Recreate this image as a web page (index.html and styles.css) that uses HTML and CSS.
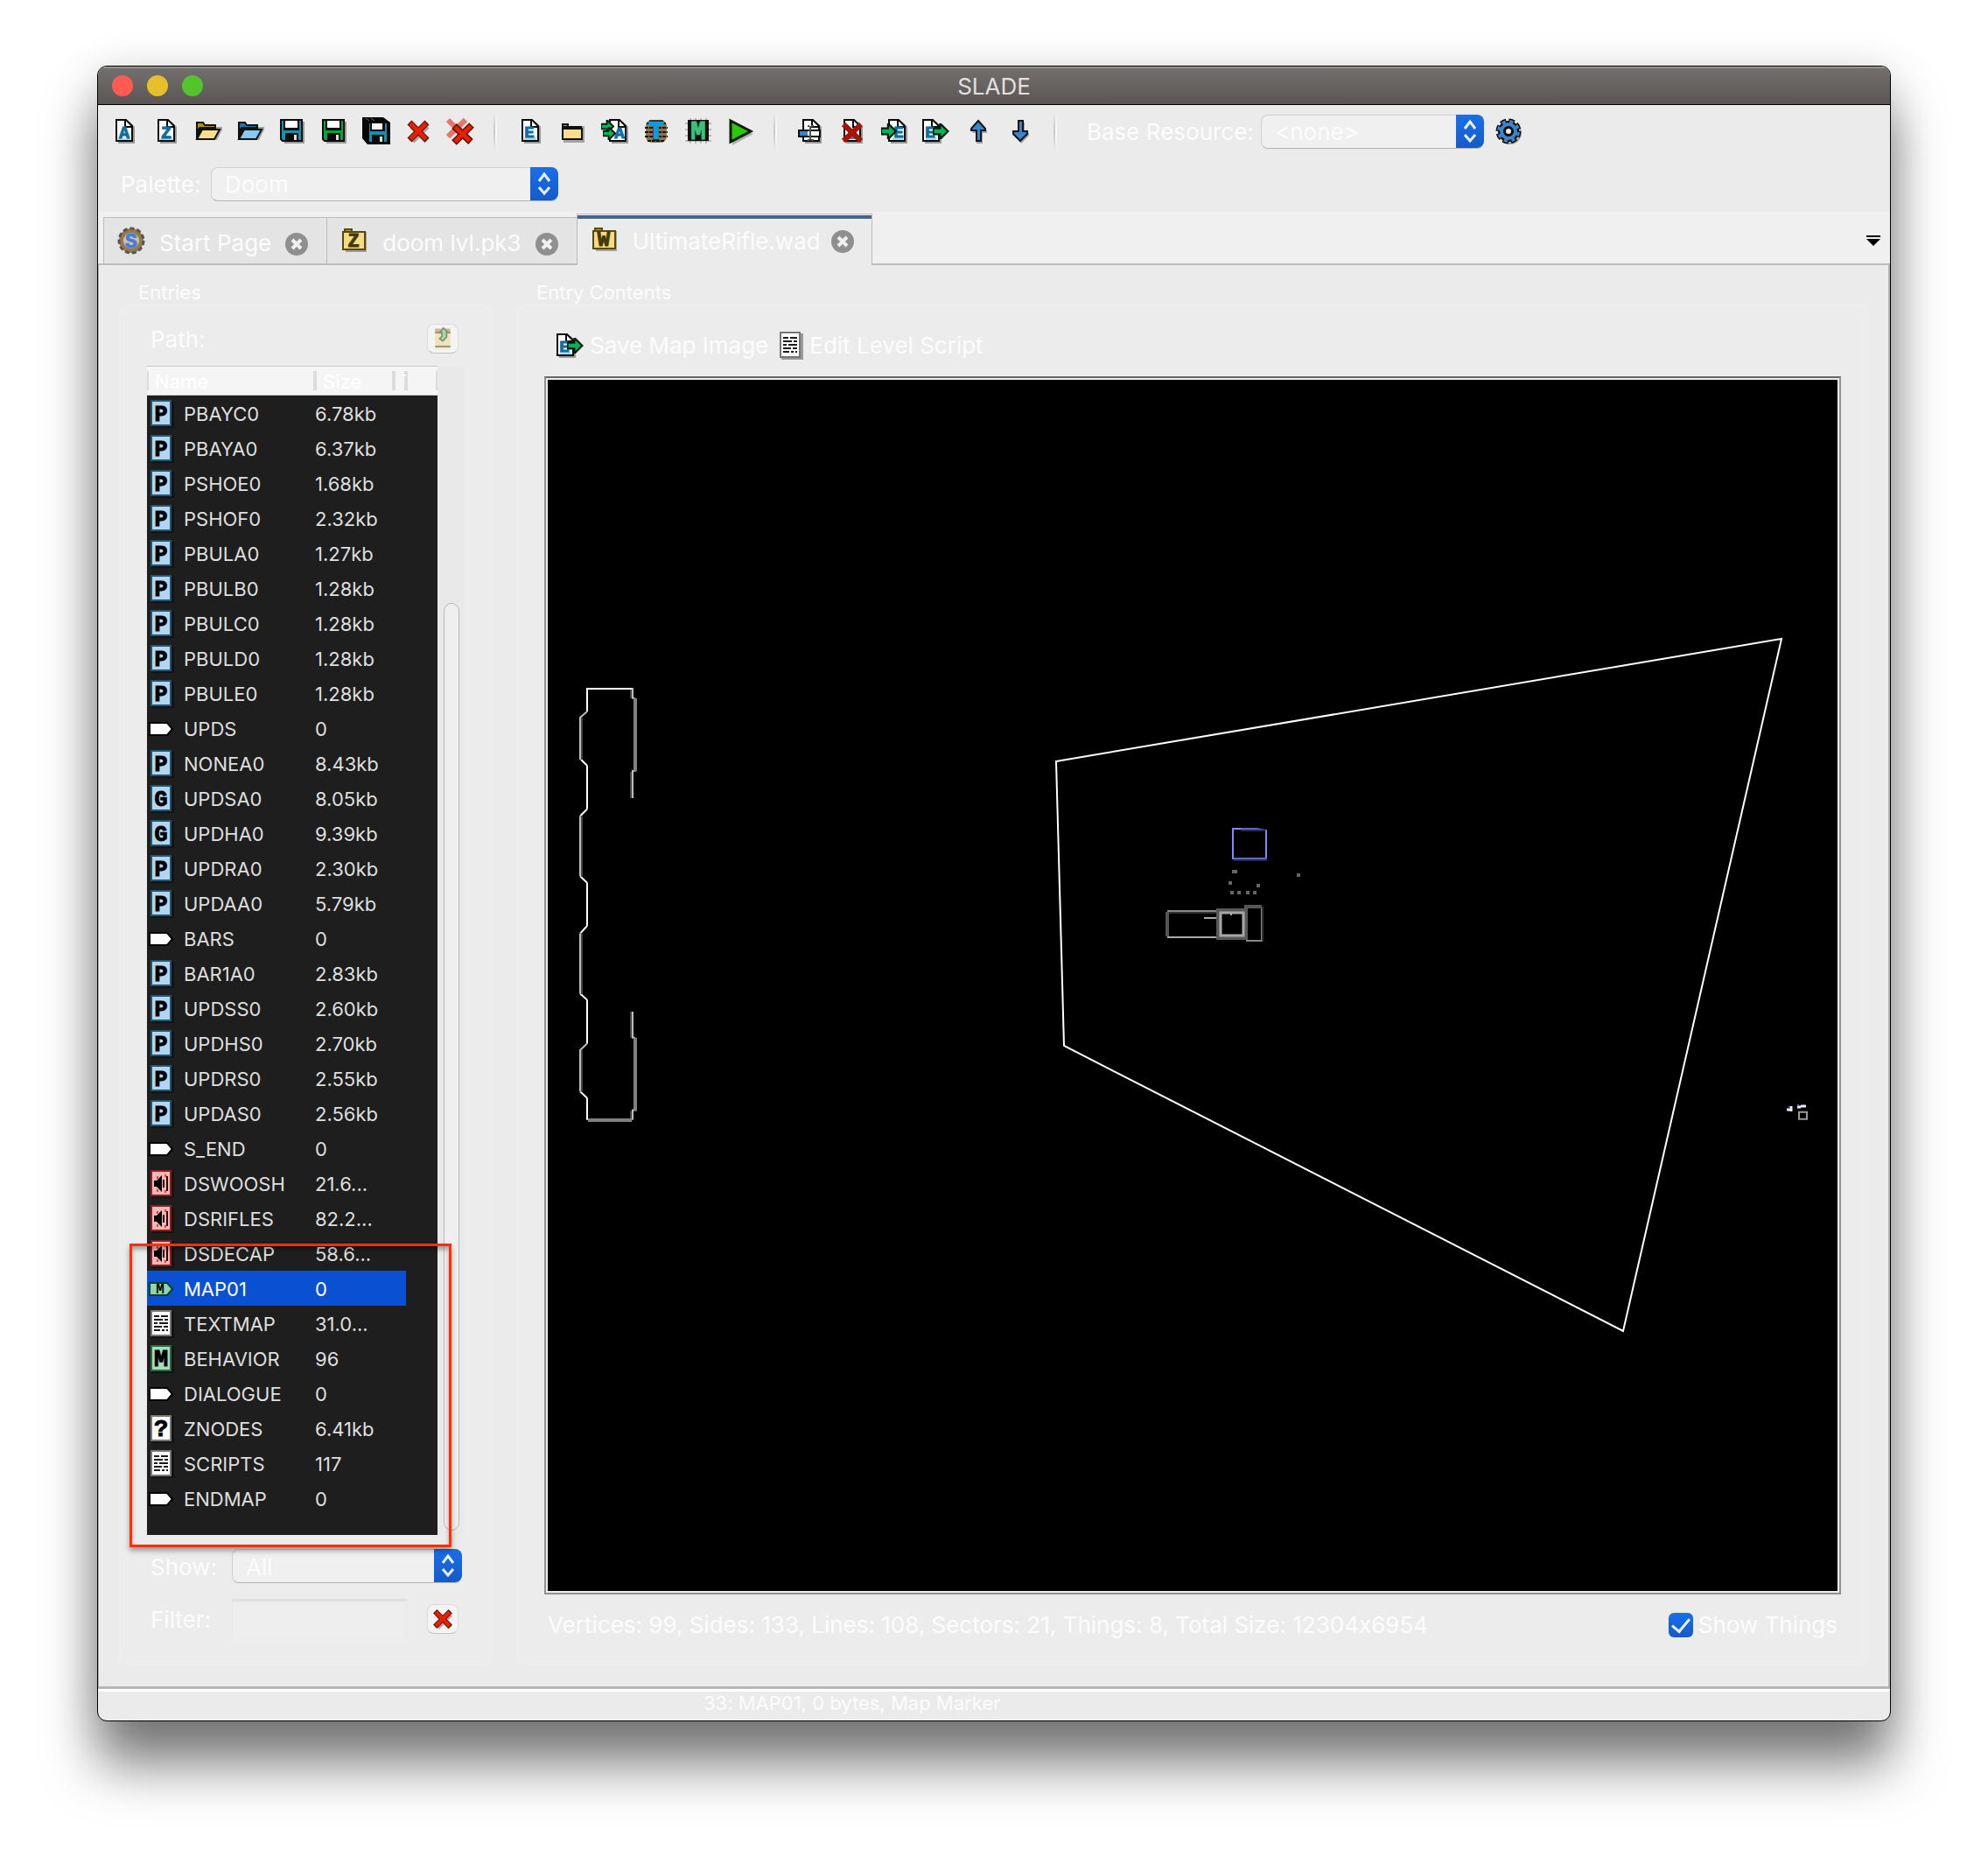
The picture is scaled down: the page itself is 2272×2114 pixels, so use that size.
FILE: index.html
```html
<!DOCTYPE html>
<html lang="en">
<head>
<meta charset="utf-8">
<title>SLADE</title>
<link rel="stylesheet" href="styles.css">
</head>
<body>
<svg class="sprite" aria-hidden="true">
  <symbol id="page" viewBox="0 0 32 32">
    <path d="M9 5h13l6 6v19H9z" fill="#000" opacity=".35"/>
    <path d="M7 3h11l7 7v17H7z" fill="#fff" stroke="#0a0a0a" stroke-width="2"/>
    <path d="M17 3v8h8" fill="none" stroke="#0a0a0a" stroke-width="2"/>
  </symbol>
  <symbol id="new-wad" viewBox="0 0 32 32">
    <use href="#page" width="32" height="32"/><path d="M9 24h14v2H9z" fill="#a9dcf5"/><text x="16" y="24" class="g blue" font-size="20">A</text>
  </symbol>
  <symbol id="new-zip" viewBox="0 0 32 32">
    <use href="#page" width="32" height="32"/><path d="M9 24h14v2H9z" fill="#a9dcf5"/><text x="16" y="24" class="g blue" font-size="20">Z</text>
  </symbol>
  <symbol id="entry" viewBox="0 0 32 32">
    <use href="#page" width="32" height="32"/><path d="M9 23h14v3H9z" fill="#a9dcf5"/><text x="15" y="23" class="g blue" font-size="19">E</text>
  </symbol>
  <symbol id="open" viewBox="0 0 32 32">
    <path d="M5 26h21l6-12v-3H9z" fill="#000" opacity=".3"/>
    <path d="M3 25V6h7l2 3h12v6" fill="var(--dark)" stroke="#111" stroke-width="2"/>
    <path d="M3 24V14l3-3h18v4H10z" fill="#111"/>
    <path d="M9 14h20l-6 11H3z" fill="var(--light)" stroke="#111" stroke-width="2"/>
  </symbol>
  <symbol id="disk" viewBox="0 0 32 32">
    <path d="M5 5h25v25H7z" fill="#000" opacity=".35"/>
    <path d="M3 3h24v24H5l-2-2z" fill="var(--disk)" stroke="#0a0a0a" stroke-width="2"/>
    <path d="M6 3h18v12H6z" fill="#0a0a0a"/><path d="M8 4h14v8H8z" fill="#fff"/>
    <path d="M8 18h15v9H8z" fill="#0a0a0a"/><path d="M18 20h3v6h-3z" fill="#ddd"/>
  </symbol>
  <symbol id="disks" viewBox="0 0 32 32">
    <path d="M0 0h24l8 6v25H6L0 24z" fill="#050505"/>
    <path d="M4 1l4 3M10 1l4 3" stroke="#666"/>
    <path d="M7 6h22v23H7z" fill="var(--disk)" stroke="#0a0a0a" stroke-width="2"/>
    <path d="M9 5h17v11H9z" fill="#0a0a0a"/><path d="M11 7h12v7H11z" fill="#fff"/>
    <path d="M11 20h14v9H11z" fill="#0a0a0a"/><path d="M20 22h3v6h-3z" fill="#ddd"/>
  </symbol>
  <symbol id="cross" viewBox="0 0 32 32">
    <path d="M9 10l17 17M26 10L9 27" stroke="#000" stroke-opacity=".3" stroke-width="7"/>
    <path d="M6 6l20 20M26 6L6 26" stroke="#5d1206" stroke-width="7"/>
    <path d="M7 7l18 18M25 7L7 25" stroke="#e62000" stroke-width="5"/>
  </symbol>
  <symbol id="cross-all" viewBox="0 0 32 32">
    <path d="M2 3l17 17M22 3L2 22" stroke="#e8756a" stroke-width="6"/>
    <path d="M9 10l19 18M29 9L9 29" stroke="#5d1206" stroke-width="8"/>
    <path d="M10 11l17 16M28 10L10 28" stroke="#e62000" stroke-width="5"/>
  </symbol>
  <symbol id="folder" viewBox="0 0 32 32">
    <path d="M6 10h24v19H6z" fill="#000" opacity=".3"/>
    <path d="M5 8h6v4H5z" fill="#c79d17" stroke="#111" stroke-width="2"/>
    <path d="M4 10h23v4H4z" fill="#111"/>
    <path d="M5 13h22v12H5z" fill="#f6de8c" stroke="#111" stroke-width="2"/>
  </symbol>
  <symbol id="arrow" viewBox="0 0 16 16">
    <path d="M0 5h7V0l8 8-8 8v-5H0z" fill="#00b457" stroke="#0a1a10" stroke-width="2"/>
  </symbol>
  <symbol id="import-files" viewBox="0 0 32 32">
    <use href="#page" x="4" width="32" height="32"/><text x="22" y="24" class="g blue" font-size="19">A</text>
    <use href="#arrow" x="1" y="3" width="15" height="15"/><use href="#arrow" x="3" y="11" width="15" height="15"/>
  </symbol>
  <symbol id="texture" viewBox="0 0 32 32">
    <rect x="4" y="3" width="24" height="26" rx="7" fill="#8f7350"/>
    <path d="M5 7h22M3 12h26M3 17h26M3 22h26M6 27h20" stroke="#1c150d" stroke-width="2" stroke-dasharray="4 1"/>
    <path d="M8 3h16v7h-5v17h-7V10H8z" fill="#1c150d" opacity=".7"/>
    <text x="16" y="24" class="g" font-size="28" fill="#0b9be0" stroke="#0b9be0" stroke-width="2">T</text>
  </symbol>
  <symbol id="map" viewBox="0 0 32 32">
    <path d="M1 7h30M1 14h30M1 21h30M1 27h30M7 1v29M13 1v29M19 1v29M25 1v29" stroke="#888"/>
    <path d="M4 3h24v24H4z" fill="#101010"/>
    <text x="16" y="25" class="g" font-size="29" fill="#3fc07a" stroke="#3fc07a">M</text>
  </symbol>
  <symbol id="run" viewBox="0 0 32 32">
    <path d="M7 6l24 13L7 32z" fill="#000" opacity=".25"/>
    <path d="M5 4l23 12L5 28z" fill="#2cc80c" stroke="#0a1a08" stroke-width="3"/>
  </symbol>
  <symbol id="rename" viewBox="0 0 32 32">
    <use href="#page" x="1" width="32" height="32"/>
    <path d="M3 15h24v7H3z" fill="#fff" stroke="#111" stroke-width="2"/><path d="M4 16h9v5H4z" fill="#3283c8"/>
    <path d="M16 10v16M13 10h2M17 10h3M13 26h2M17 26h3" stroke="#555" stroke-width="2"/>
  </symbol>
  <symbol id="delete" viewBox="0 0 32 32">
    <use href="#page" width="32" height="32"/><path d="M11 13h10v12H11z" fill="#4d7da8"/>
    <path d="M6 8l20 19M26 8L6 27" stroke="#a81200" stroke-width="6"/>
  </symbol>
  <symbol id="import" viewBox="0 0 32 32">
    <use href="#page" x="3" width="32" height="32"/><path d="M14 23h12v3H14z" fill="#a9dcf5"/><text x="21" y="23" class="g blue" font-size="19">E</text>
    <use href="#arrow" x="1" y="7" width="18" height="18"/>
  </symbol>
  <symbol id="export" viewBox="0 0 32 32">
    <use href="#page" x="-6" width="32" height="32"/><path d="M4 23h12v3H4z" fill="#a9dcf5"/><text x="9" y="23" class="g blue" font-size="19">E</text>
    <use href="#arrow" x="12" y="7" width="19" height="18"/>
  </symbol>
  <symbol id="up" viewBox="0 0 32 32">
    <path d="M17 6l9 9v3h-5v12h-7V18H9z" fill="#000" opacity=".3"/>
    <path d="M16 4l8 9v2h-5v12h-5V15H8v-2z" fill="#3b86c8" stroke="#0c1620" stroke-width="2"/>
  </symbol>
  <symbol id="down" viewBox="0 0 32 32">
    <path d="M17 30l9-9v-3h-5V6h-7v12H9z" fill="#000" opacity=".3"/>
    <path d="M16 27l8-8v-3h-5V4h-5v12H8v3z" fill="#3b86c8" stroke="#0c1620" stroke-width="2"/>
  </symbol>
  <symbol id="gear" viewBox="0 0 32 32">
    <circle cx="18" cy="18" r="13" fill="#000" opacity=".3"/>
    <circle cx="16" cy="16" r="12" fill="#0a0a0a" stroke="#0a0a0a" stroke-width="5" stroke-dasharray="6.4 3.02"/>
    <circle cx="16" cy="16" r="11" fill="none" stroke="#3b86c8" stroke-width="4" stroke-dasharray="4 4.64" stroke-dashoffset="-1"/>
    <circle cx="16" cy="16" r="8" fill="none" stroke="#3b86c8" stroke-width="4"/>
    <circle cx="16" cy="16" r="3" fill="#eee"/>
  </symbol>
  <symbol id="slade" viewBox="0 0 32 32">
    <circle cx="16" cy="16" r="14" fill="#97794a" stroke="#555" stroke-width="3" stroke-dasharray="5 3"/>
    <circle cx="16" cy="16" r="9" fill="#c9c4b8"/>
    <text x="16" y="24" class="g" font-size="23" fill="#4a7bd6" stroke="#4a7bd6">S</text>
  </symbol>
  <symbol id="arch" viewBox="0 0 32 32">
    <path d="M4 6h26v23H6z" fill="#000" opacity=".3"/>
    <path d="M5 3h8v4H5z" fill="#bf9a17" stroke="#5b4a0b" stroke-width="2"/>
    <path d="M3 6h25v20H3z" fill="#f3dc84" stroke="#5b4a0b" stroke-width="2"/>
  </symbol>
  <symbol id="zip" viewBox="0 0 32 32"><use href="#arch" width="32" height="32"/><text x="15" y="23" class="g" font-size="22" fill="#453705" stroke="#453705">Z</text></symbol>
  <symbol id="wad" viewBox="0 0 32 32"><use href="#arch" width="32" height="32"/><text x="15" y="23" class="g" font-size="24" fill="#453705" stroke="#453705">W</text></symbol>
  <symbol id="close" viewBox="0 0 26 26">
    <circle cx="13" cy="13" r="13" fill="#8f8f8f"/><path d="M8 8l10 10M18 8L8 18" stroke="#f0f0f0" stroke-width="4"/>
  </symbol>
  <symbol id="step" viewBox="0 0 32 38">
    <path d="M10 16l6-8 6 8M10 23l6 7 6-7" fill="none" stroke="#e8effc" stroke-width="3"/>
  </symbol>
  <symbol id="card" viewBox="0 0 32 32">
    <path d="M6 2h25v30H6z" fill="#000" opacity=".35"/>
    <path d="M5 1h22v28H5z" fill="var(--fill)" stroke="var(--edge)" stroke-width="2"/>
  </symbol>
  <symbol id="patch" viewBox="0 0 32 32"><use href="#card" width="32" height="32"/><text x="16" y="24" class="g" font-size="25" stroke="#000">P</text></symbol>
  <symbol id="gfx" viewBox="0 0 32 32"><use href="#card" width="32" height="32"/><text x="16" y="24" class="g" font-size="25" stroke="#000">G</text></symbol>
  <symbol id="behavior" viewBox="0 0 32 32"><use href="#card" width="32" height="32"/><text x="16" y="24" class="g" font-size="27" stroke="#000">M</text></symbol>
  <symbol id="unknown" viewBox="0 0 32 32"><use href="#card" width="32" height="32"/><text x="16" y="24" class="g" font-size="27" stroke="#000">?</text></symbol>
  <symbol id="sound" viewBox="0 0 32 32">
    <use href="#card" width="32" height="32"/>
    <path d="M8 12h3l6-6v19l-6-6H8z" fill="#000"/><path d="M19 11v9M23 7v17" stroke="#2a0505" stroke-width="2"/>
    <path d="M12 7v3M12 22v3M21 5v3M21 23v3" stroke="#e64040" stroke-width="2"/>
  </symbol>
  <symbol id="text" viewBox="0 0 32 32">
    <use href="#card" width="32" height="32"/>
    <path d="M8 7h6M16 7h8M8 11h10M20 11h4M8 15h4M14 15h10M8 19h9M19 19h5M8 23h7M17 23h3M22 23h2" stroke="#1a1a1a" stroke-width="2"/>
  </symbol>
  <symbol id="marker" viewBox="0 0 32 32">
    <path d="M3 9h20l6 7-6 7H3z" fill="#fff" stroke="#000" stroke-width="2"/>
  </symbol>
  <symbol id="mapmarker" viewBox="0 0 32 32">
    <path d="M3 9h20l6 7-6 7H3z" fill="#8fd8a6" stroke="#0e3a3a" stroke-width="2"/>
    <text x="15" y="21" class="g" font-size="16">M</text>
  </symbol>
  <symbol id="updir" viewBox="0 0 32 32">
    <path d="M6 3h20v26H6z" fill="#efe3b8"/><path d="M6 3h20v4H6z" fill="#c9bb82"/><path d="M6 8h20M6 26h20" stroke="#908c78" stroke-width="2"/>
    <path d="M17 2l6 6h-2v6l-5 5-4-3 3-3V8h-3z" fill="#a3d9a5" stroke="#7d8f80" stroke-width="2"/>
  </symbol>
</svg>

<main class="window">
  <header class="titlebar">
    <div class="lights">
      <button class="light red" aria-label="Close"></button>
      <button class="light amber" aria-label="Minimize"></button>
      <button class="light green" aria-label="Zoom"></button>
    </div>
    <h1>SLADE</h1>
  </header>

  <div class="toolbar">
    <div class="tools">
      <button class="tool" aria-label="New WAD"><svg><use href="#new-wad"/></svg></button>
      <button class="tool" aria-label="New Zip"><svg><use href="#new-zip"/></svg></button>
      <button class="tool yellow" aria-label="Open"><svg><use href="#open"/></svg></button>
      <button class="tool sky" aria-label="Open Directory"><svg><use href="#open"/></svg></button>
      <button class="tool teal" aria-label="Save"><svg><use href="#disk"/></svg></button>
      <button class="tool leaf" aria-label="Save As"><svg><use href="#disk"/></svg></button>
      <button class="tool teal" aria-label="Save All"><svg><use href="#disks"/></svg></button>
      <button class="tool" aria-label="Close Archive"><svg><use href="#cross"/></svg></button>
      <button class="tool" aria-label="Close All"><svg><use href="#cross-all"/></svg></button>
      <span class="rule"></span>
      <button class="tool" aria-label="New Entry"><svg><use href="#entry"/></svg></button>
      <button class="tool" aria-label="New Directory"><svg><use href="#folder"/></svg></button>
      <button class="tool" aria-label="Import Files"><svg><use href="#import-files"/></svg></button>
      <button class="tool" aria-label="Texture Editor"><svg><use href="#texture"/></svg></button>
      <button class="tool" aria-label="Map Editor"><svg><use href="#map"/></svg></button>
      <button class="tool" aria-label="Run Archive"><svg><use href="#run"/></svg></button>
      <span class="rule"></span>
      <button class="tool" aria-label="Rename Entry"><svg><use href="#rename"/></svg></button>
      <button class="tool" aria-label="Delete Entry"><svg><use href="#delete"/></svg></button>
      <button class="tool" aria-label="Import Entry"><svg><use href="#import"/></svg></button>
      <button class="tool" aria-label="Export Entry"><svg><use href="#export"/></svg></button>
      <button class="tool" aria-label="Move Up"><svg><use href="#up"/></svg></button>
      <button class="tool" aria-label="Move Down"><svg><use href="#down"/></svg></button>
      <span class="rule"></span>
      <label class="base-label" for="base">Base Resource:</label>
      <span class="select base"><select id="base"><option>&lt;none&gt;</option></select><svg class="step"><use href="#step"/></svg></span>
      <button class="tool" aria-label="Settings"><svg><use href="#gear"/></svg></button>
    </div>
    <div class="tools palette-row">
      <label class="palette-label" for="palette">Palette:</label>
      <span class="select palette"><select id="palette"><option>Doom</option></select><svg class="step"><use href="#step"/></svg></span>
    </div>
  </div>

  <nav class="tabs">
    <div class="tab"><svg class="icon"><use href="#slade"/></svg><span class="name">Start Page</span><button class="close" aria-label="Close tab"><svg><use href="#close"/></svg></button></div>
    <div class="tab"><svg class="icon"><use href="#zip"/></svg><span class="name">doom lvl.pk3</span><button class="close" aria-label="Close tab"><svg><use href="#close"/></svg></button></div>
    <div class="tab active"><svg class="icon"><use href="#wad"/></svg><span class="name">UltimateRifle.wad</span><button class="close" aria-label="Close tab"><svg><use href="#close"/></svg></button></div>
    <button class="tab-menu" aria-label="Tab list"><svg viewBox="0 0 16 12"><path d="M0 0h16v2H0zM0 4h16l-8 8z"/></svg></button>
  </nav>

  <div class="content">
    <section class="group entries">
      <h2>Entries</h2>
      <div class="box">
        <div class="path-row"><span>Path:</span><button class="mini" aria-label="Up directory" disabled><svg><use href="#updir"/></svg></button></div>
        <div class="list">
          <div class="rows">
            <table>
              <colgroup><col class="c-name"><col class="c-size"><col class="c-type"><col></colgroup>
              <thead><tr><th>Name</th><th>Size</th><th>T</th><th></th></tr></thead>
              <tbody>
                <tr><td><div class="entry blue-card"><svg><use href="#patch"/></svg>PBAYC0</div></td><td>6.78kb</td><td></td><td></td></tr>
                <tr><td><div class="entry blue-card"><svg><use href="#patch"/></svg>PBAYA0</div></td><td>6.37kb</td><td></td><td></td></tr>
                <tr><td><div class="entry blue-card"><svg><use href="#patch"/></svg>PSHOE0</div></td><td>1.68kb</td><td></td><td></td></tr>
                <tr><td><div class="entry blue-card"><svg><use href="#patch"/></svg>PSHOF0</div></td><td>2.32kb</td><td></td><td></td></tr>
                <tr><td><div class="entry blue-card"><svg><use href="#patch"/></svg>PBULA0</div></td><td>1.27kb</td><td></td><td></td></tr>
                <tr><td><div class="entry blue-card"><svg><use href="#patch"/></svg>PBULB0</div></td><td>1.28kb</td><td></td><td></td></tr>
                <tr><td><div class="entry blue-card"><svg><use href="#patch"/></svg>PBULC0</div></td><td>1.28kb</td><td></td><td></td></tr>
                <tr><td><div class="entry blue-card"><svg><use href="#patch"/></svg>PBULD0</div></td><td>1.28kb</td><td></td><td></td></tr>
                <tr><td><div class="entry blue-card"><svg><use href="#patch"/></svg>PBULE0</div></td><td>1.28kb</td><td></td><td></td></tr>
                <tr><td><div class="entry"><svg><use href="#marker"/></svg>UPDS</div></td><td>0</td><td></td><td></td></tr>
                <tr><td><div class="entry blue-card"><svg><use href="#patch"/></svg>NONEA0</div></td><td>8.43kb</td><td></td><td></td></tr>
                <tr><td><div class="entry blue-card"><svg><use href="#gfx"/></svg>UPDSA0</div></td><td>8.05kb</td><td></td><td></td></tr>
                <tr><td><div class="entry blue-card"><svg><use href="#gfx"/></svg>UPDHA0</div></td><td>9.39kb</td><td></td><td></td></tr>
                <tr><td><div class="entry blue-card"><svg><use href="#patch"/></svg>UPDRA0</div></td><td>2.30kb</td><td></td><td></td></tr>
                <tr><td><div class="entry blue-card"><svg><use href="#patch"/></svg>UPDAA0</div></td><td>5.79kb</td><td></td><td></td></tr>
                <tr><td><div class="entry"><svg><use href="#marker"/></svg>BARS</div></td><td>0</td><td></td><td></td></tr>
                <tr><td><div class="entry blue-card"><svg><use href="#patch"/></svg>BAR1A0</div></td><td>2.83kb</td><td></td><td></td></tr>
                <tr><td><div class="entry blue-card"><svg><use href="#patch"/></svg>UPDSS0</div></td><td>2.60kb</td><td></td><td></td></tr>
                <tr><td><div class="entry blue-card"><svg><use href="#patch"/></svg>UPDHS0</div></td><td>2.70kb</td><td></td><td></td></tr>
                <tr><td><div class="entry blue-card"><svg><use href="#patch"/></svg>UPDRS0</div></td><td>2.55kb</td><td></td><td></td></tr>
                <tr><td><div class="entry blue-card"><svg><use href="#patch"/></svg>UPDAS0</div></td><td>2.56kb</td><td></td><td></td></tr>
                <tr><td><div class="entry"><svg><use href="#marker"/></svg>S_END</div></td><td>0</td><td></td><td></td></tr>
                <tr><td><div class="entry red-card"><svg><use href="#sound"/></svg>DSWOOSH</div></td><td>21.6...</td><td></td><td></td></tr>
                <tr><td><div class="entry red-card"><svg><use href="#sound"/></svg>DSRIFLES</div></td><td>82.2...</td><td></td><td></td></tr>
                <tr><td><div class="entry red-card"><svg><use href="#sound"/></svg>DSDECAP</div></td><td>58.6...</td><td></td><td></td></tr>
                <tr class="selected"><td><div class="entry"><svg><use href="#mapmarker"/></svg>MAP01</div></td><td>0</td><td></td><td></td></tr>
                <tr><td><div class="entry white-card"><svg><use href="#text"/></svg>TEXTMAP</div></td><td>31.0...</td><td></td><td></td></tr>
                <tr><td><div class="entry green-card"><svg><use href="#behavior"/></svg>BEHAVIOR</div></td><td>96</td><td></td><td></td></tr>
                <tr><td><div class="entry"><svg><use href="#marker"/></svg>DIALOGUE</div></td><td>0</td><td></td><td></td></tr>
                <tr><td><div class="entry white-card"><svg><use href="#unknown"/></svg>ZNODES</div></td><td>6.41kb</td><td></td><td></td></tr>
                <tr><td><div class="entry white-card"><svg><use href="#text"/></svg>SCRIPTS</div></td><td>117</td><td></td><td></td></tr>
                <tr><td><div class="entry"><svg><use href="#marker"/></svg>ENDMAP</div></td><td>0</td><td></td><td></td></tr>
              </tbody>
            </table>
          </div>
          <div class="scrollbar"><div class="thumb"></div></div>
          <div class="callout"></div>
        </div>
        <div class="form-row show-row"><label for="show">Show:</label><span class="select show"><select id="show"><option>All</option></select><svg class="step"><use href="#step"/></svg></span></div>
        <div class="form-row filter-row"><label for="filter">Filter:</label><input id="filter" type="text"><button class="mini" aria-label="Clear filter"><svg><use href="#cross"/></svg></button></div>
      </div>
    </section>

    <section class="group preview">
      <h2>Entry Contents</h2>
      <div class="box">
        <div class="actions">
          <button class="action"><svg><use href="#export"/></svg>Save Map Image</button>
          <button class="action white-card"><svg><use href="#text"/></svg>Edit Level Script</button>
        </div>
        <div class="canvas">
          <svg viewBox="0 0 1474 1384" fill="none">
            <path d="M581 436L1410 296L1229 1087L590 761Z" stroke="#fff" stroke-width="2"/>
            <g transform="translate(14 336) scale(.33333 .338)" stroke-width="6">
              <path d="M249 50H93V127M93 310V457M93 706V852M93 1102V1250M93 1434V1508M72 290L93 310M93 457L70 480M70 685L93 706M93 852L70 877M70 1082L93 1102M70 1413L93 1434" stroke="#fff"/>
              <path d="M93 127L69 148V290M69 480V685M69 877V1082M93 1250L69 1272V1413M249 47V82H257M258 328H249V420M249 1142V1230H258M258 1475H249V1508" stroke="#bbb"/>
              <path d="M75 148V290M75 480V685M75 877V1082M75 1272V1413M243 53V82M243 331V420M243 1142V1230M243 1478V1505" stroke="#444"/>
              <path d="M258 82V330M258 1230V1478M96 1509H246" stroke="#808080" stroke-width="12"/>
            </g>
            <g transform="translate(684 496) scale(.33333)" stroke-width="6">
              <path d="M297 156V51H324M411 54V153" stroke="#8088ff"/><path d="M324 51H378L411 57M300 153H414" stroke="#6068c0"/><path d="M300 159H414M324 57H408" stroke="#262850"/>
              <path d="M294 198h18M516 210h12M282 237h12M378 246h12M288 270h12M312 270h12M342 270h12M366 270h12" stroke="#666" stroke-width="12"/>
              <path d="M72 333H246M342 435H396V318" stroke="#888"/>
              <path d="M72 339H246M399 318V435" stroke="#333"/><path d="M72 336V420" stroke="#555" stroke-width="12"/>
              <path d="M72 423H252M198 357H246M291 342v6" stroke="#aaa"/>
              <path d="M246 330H342V426H246zM336 318H396" stroke="#585858" stroke-width="12"/>
              <path d="M255 339H333V417H255z" stroke="#a8a8a8" stroke-width="9"/>
            </g>
            <g transform="translate(1154 806) scale(.33333)" stroke-width="6">
              <path d="M786 84h18M801 72v18M822 75h12M834 72h18" stroke="#eee" stroke-width="9"/>
              <path d="M795 72v9M825 66v6" stroke="#6068c8"/>
              <path d="M828 92H855V116H828z" stroke="#999"/>
            </g>
          </svg>
        </div>
        <div class="info"><span>Vertices: 99, Sides: 133, Lines: 108, Sectors: 21, Things: 8, Total Size: 12304x6954</span>
          <label class="things"><input type="checkbox" checked>Show Things</label></div>
      </div>
    </section>
  </div>

  <footer class="status"><span>33: MAP01, 0 bytes, Map Marker</span></footer>
</main>
</body>
</html>
```

FILE: styles.css
```css
* { box-sizing: border-box; }

body {
  margin: 0;
  padding: 75px 111px 147px;
  background: #fff;
  color: #fcfcfc;
  font: 26px/32px Inter, "Liberation Sans", sans-serif;
  font-feature-settings: "calt" 0;
}

h1, h2 { margin: 0; font-weight: 400; }
button, select, input { font: inherit; color: inherit; font-feature-settings: inherit; }
button { padding: 0; border: 0; background: none; }
svg { display: block; }
.sprite { display: none; }

/* letters inside icons */
.g { font-family: "Liberation Mono", monospace; font-weight: 700; text-anchor: middle; }
.blue { fill: #0c6f9f; stroke: #0c6f9f; }

.window {
  border: 1px solid #000;
  border-radius: 11px;
  background: #ebebeb;
  overflow: clip;
  box-shadow: 0 50px 60px rgba(0, 0, 0, .5), 0 4px 50px rgba(0, 0, 0, .14);
}

.titlebar {
  display: grid;
  grid-template-columns: 1fr auto 1fr;
  align-items: center;
  height: 44px;
  padding: 0 16px;
  border-bottom: 1px solid #000;
  background: linear-gradient(#72706e, #5b5655);
  box-shadow: inset 0 2px #949390;
}
.titlebar h1 { padding-top: 2px; font-size: 26px; color: #e2e0df; }
.lights { display: flex; gap: 16px; }
.light { width: 24px; height: 24px; border-radius: 50%; }
.red { background: #ff5b52; }
.amber { background: #e6c02a; }
.green { background: #53c42b; }

.toolbar { height: 122px; }
.tools { display: flex; align-items: center; height: 60px; padding-left: 6px; }
.tool { width: 48px; height: 48px; display: grid; place-items: center; }
.tool svg { width: 32px; height: 32px; }
.yellow { --dark: #b8920f; --light: #f6de8c; }
.sky { --dark: #1276b8; --light: #86c9f5; }
.teal { --disk: #1590ad; }
.leaf { --disk: #00a53c; }
.rule {
  width: 4px;
  height: 44px;
  margin: 0 14px;
  background: linear-gradient(90deg, #c6c6c6 50%, #fafafa 50%);
  mask-image: linear-gradient(transparent, #000, transparent);
}
.base-label { width: 219px; padding: 2px 0 0 20px; }
.palette-label { width: 123px; padding: 2px 0 0 20px; }

.select { display: grid; height: 39px; }
.select > * { grid-area: 1 / 1; }
.select select {
  appearance: none;
  width: 100%;
  height: 39px;
  padding: 2px 36px 0 15px;
  border: 1px solid #d0d0d0;
  border-bottom-color: #b4b4b4;
  border-radius: 8px;
  background: #f0f0f0;
}
.step {
  justify-self: end;
  width: 32px;
  height: 38px;
  border-radius: 0 8px 8px 0;
  background: linear-gradient(#1a6eea, #155bc8);
  pointer-events: none;
}
.base { width: 255px; margin-right: 4px; }
.palette { width: 397px; }

.tabs {
  display: flex;
  align-items: flex-end;
  height: 61px;
  padding: 0 11px 0 6px;
  border-bottom: 2px solid #bcbcbc;
  background: #f0f0f0;
}
.tab {
  display: flex;
  align-items: center;
  height: 53px;
  padding: 0 21px 0 15px;
  border: 1px solid #bcbcbc;
  border-bottom: 0;
  border-right-width: 0;
  background: #e4e4e4;
}
.tab.active {
  height: 59px;
  margin-bottom: -2px;
  padding-right: 20px;
  border-right-width: 1px;
  background: #ebebeb;
  box-shadow: inset 0 1px #f4f4f4, inset 0 5px #42648f;
}
.icon { width: 32px; height: 32px; }
.name { padding: 6px 16px 0; }
.close, .close svg { width: 26px; height: 26px; }
.close { margin-top: 7px; }
.active .name { padding: 4px 12px 0 16px; }
.active .close { margin-top: 4px; }
.tab-menu { margin: 0 0 20px auto; }
.tab-menu svg { width: 16px; height: 12px; }

.content {
  display: grid;
  grid-template-columns: 426px 1fr;
  gap: 29px;
  padding: 17px 23px 24px;
  border: solid #b4b4b4;
  border-width: 0 2px 2px 1px;
}
.group { display: flex; flex-direction: column; min-width: 0; }
.group h2 { padding-left: 22px; font-size: 22px; line-height: 28px; }
.box {
  display: flex;
  flex-direction: column;
  flex: 1;
  border: 1px solid #efefef;
  border-radius: 10px;
  background: #ececec;
}
.entries .box { padding: 21px 31px 29px; }
.preview .box { padding: 21px 30px 10px; }

.path-row { display: flex; justify-content: space-between; align-items: center; height: 34px; margin: 0 6px 14px 4px; }
.path-row span { padding-top: 2px; }
.mini {
  width: 36px;
  height: 34px;
  display: grid;
  place-items: center;
  border: 1px solid #dcdcdc;
  border-bottom-color: #c4c4c4;
  border-radius: 8px;
  background: #f4f4f4;
}
.mini svg { width: 28px; height: 28px; }

.list { position: relative; display: flex; }
.rows { flex: 1; padding-bottom: 22px; background: #1e1e1e; }
table { width: 100%; table-layout: fixed; border-collapse: collapse; font-size: 22px; color: #dfdfdf; }
.c-name { width: 192px; }
.c-size { width: 90px; }
.c-type { width: 14px; }
th {
  height: 34px;
  padding: 2px 0 0 9px;
  overflow: hidden;
  font-size: 22px;
  line-height: 28px;
  font-weight: 400;
  text-align: left;
  color: #fff;
  background: linear-gradient(#dcdcdc, #dcdcdc) 100% 50% / 2px 22px no-repeat, linear-gradient(#dcdcdc, #dcdcdc) 0 50% / 2px 22px no-repeat, #f5f5f5;
  box-shadow: inset 0 1px #c8c8c8, inset 0 -1px #c8c8c8;
}
td { height: 40px; padding: 2px 0 0; line-height: 32px; white-space: nowrap; }
td:first-child { padding-top: 0; }
.entry { display: flex; align-items: center; gap: 10px; height: 34px; padding-top: 2px; }
.entry svg { width: 32px; height: 32px; }
.blue-card { --fill: #b3d6ee; --edge: #1f5672; }
.red-card { --fill: #f5b6b6; --edge: #8f1f1f; }
.green-card { --fill: #a6dcb9; --edge: #2c6a45; }
.white-card { --fill: #fff; --edge: #777; }
.selected { color: #fff; }
.selected td:not(:last-child) { background: #0a50d2; }

.scrollbar { width: 30px; padding: 271px 5px 5px 7px; background: #e9e9e9; }
.thumb { height: 100%; border: 1px solid #b8b8b8; border-radius: 9px; background: #efefef; }
.callout {
  position: absolute;
  inset: 1003px 14px -14px -20px;
  border: 3px solid #ff2f0a;
  box-shadow: 0 4px 6px rgba(0, 0, 0, .35), inset 0 4px 5px rgba(0, 0, 0, .3);
  pointer-events: none;
}

.form-row { display: flex; align-items: center; padding-left: 4px; }
.form-row label { width: 93px; padding-top: 2px; }
.show-row { margin-top: 16px; }
.show { width: 263px; }
.filter-row { margin-top: 18px; }
.filter-row input {
  width: 200px;
  height: 46px;
  padding: 0 8px;
  border: 0;
  background: #eee;
  box-shadow: inset 0 3px 3px #dedede;
}
.filter-row .mini { margin: 0 6px 0 auto; }

.actions { display: flex; gap: 9px; height: 48px; margin-bottom: 12px; padding: 2px 0 0 14px; }
.action { display: flex; align-items: center; gap: 6px; }
.action svg { width: 32px; height: 32px; }
.canvas {
  display: flex;
  flex: 1;
  padding: 2px;
  border: 2px solid #919191;
  border-top-color: #666;
  background: linear-gradient(#000, #000) content-box, #ededed;
}
.canvas svg { flex: 1; width: 100%; }
.info { display: flex; justify-content: space-between; align-items: center; height: 70px; padding: 0 4px; }
.things { display: flex; align-items: center; gap: 6px; }
.things input {
  appearance: none;
  display: grid;
  place-items: center;
  width: 28px;
  height: 28px;
  margin: 0;
  border-radius: 6px;
  background: linear-gradient(#1a6eea, #155bc8);
}
.things input:checked::before {
  content: "";
  width: 9px;
  height: 17px;
  margin-bottom: 4px;
  border: solid #e8effc;
  border-width: 0 3px 3px 0;
  transform: rotate(40deg);
}

.status {
  height: 37px;
  padding: 0 0 0 692px;
  border-top: 1px solid #bdbdbd;
  box-shadow: inset 0 3px #fff;
  font-size: 22px;
  line-height: 32px;
}
```
